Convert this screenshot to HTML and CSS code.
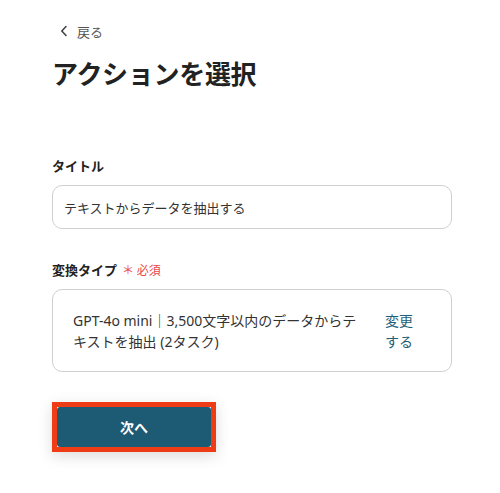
FILE: index.html
```html
<!DOCTYPE html>
<html lang="ja">
<head>
<meta charset="utf-8">
<link rel="stylesheet" href="styles.css">
</head>
<body>
<div class="page">
  <a class="back" href="#">
    <svg class="chev" width="8" height="12" viewBox="0 0 8 12"><polyline points="6,1.5 1.8,6 6,10.5" fill="none" stroke="#444" stroke-width="1.6" stroke-linecap="round" stroke-linejoin="round"/></svg>
    <span>戻る</span>
  </a>
  <h1 class="title">アクションを選択</h1>

  <div class="field first">
    <div class="label">タイトル</div>
    <div class="input">テキストからデータを抽出する</div>
  </div>

  <div class="field">
    <div class="label">変換タイプ <span class="req">＊ 必須</span></div>
    <div class="select">
      <div class="select-text">GPT-4o mini｜3,500文字以内のデータからテキストを抽出 (2タスク)</div>
      <a class="change" href="#">変更する</a>
    </div>
  </div>

  <div class="actions">
    <span class="highlight"><button class="next">次へ</button></span>
  </div>
</div>
</body>
</html>
```

FILE: styles.css
```css
* { box-sizing: border-box; }
html, body { margin: 0; padding: 0; background: #fff; }
body {
  font-family: "Noto Sans CJK JP", "Noto Sans", sans-serif;
  color: #333;
  width: 500px;
  height: 493px;
  overflow: hidden;
}
.page {
  padding: 20px 48px 0 52px;
  width: 500px;
}
.back {
  display: flex;
  align-items: center;
  gap: 9px;
  height: 22px;
  padding-left: 8px;
  color: #555;
  font-size: 13px;
  text-decoration: none;
}
.chev { display: block; }
.title {
  margin: 13px 0 0 0;
  font-size: 26px;
  line-height: 36px;
  font-weight: 700;
  color: #222;
  letter-spacing: -0.3px;
}
.field { margin-top: 31px; }
.field.first { margin-top: 65px; }
.label {
  font-size: 13px;
  font-weight: 700;
  line-height: 20px;
  color: #222;
  margin-bottom: 9px;
}
.req {
  color: #e8484a;
  font-weight: 400;
  font-size: 12px;
  margin-left: 2px;
}
.input {
  width: 400px;
  height: 44px;
  border: 1px solid #cfcfcf;
  border-radius: 10px;
  padding: 0 11px;
  display: flex;
  align-items: center;
  font-size: 13px;
  color: #333;
}
.select {
  width: 400px;
  height: 83px;
  border: 1px solid #cfcfcf;
  border-radius: 10px;
  padding: 0 38px 0 20px;
  display: flex;
  align-items: center;
  gap: 15px;
  font-size: 14px;
  line-height: 21px;
}
.select-text {
  flex: 1;
  color: #333;
  font-family: "Noto Sans", "Noto Sans CJK JP", sans-serif;
}
.change {
  width: 28px;
  color: #1f5f7a;
  text-decoration: none;
  flex: none;
}
.actions { margin-top: 30px; }
.highlight {
  display: inline-block;
  border: 5px solid #f03c14;
  box-shadow: 0 4px 14px rgba(0, 0, 0, 0.14);
}
.next {
  display: block;
  width: 154px;
  height: 40px;
  border: none;
  border-radius: 3px;
  background: #1d5a73;
  color: #fff;
  font-family: inherit;
  font-size: 14px;
  font-weight: 700;
  padding: 0;
}
```
